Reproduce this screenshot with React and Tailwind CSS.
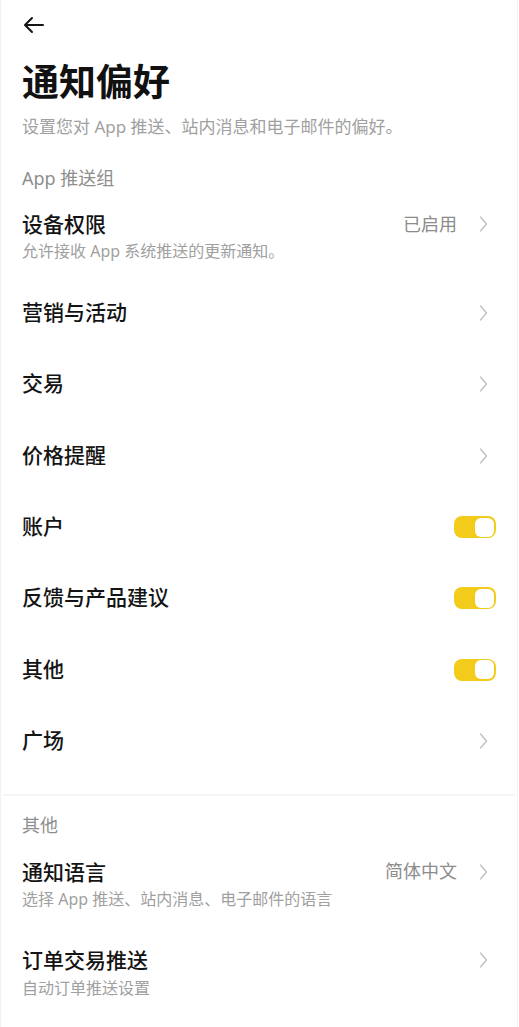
import React from "react";

const FONT = { fontFamily: '"Noto Sans", "Noto Sans CJK SC", sans-serif' };

function Chevron() {
  return (
    <svg width="20" height="20" viewBox="0 0 20 20" className="shrink-0">
      <path d="M4.5 3 L10.5 10 L4.5 17" fill="none" stroke="#c4c4c4" strokeWidth="1.6" strokeLinecap="round" strokeLinejoin="round" />
    </svg>
  );
}

function Toggle() {
  return (
    <div className="w-[42px] h-[22px] rounded-[8px] bg-[#f3cc1b] flex items-center justify-end pr-[2px]">
      <div className="w-[19px] h-[19px] rounded-[6px] bg-white" />
    </div>
  );
}

function SingleRow({ title, toggle }) {
  return (
    <div className="h-[71.33px] flex items-center justify-between">
      <span className="text-[21px] leading-[28px] font-medium text-[#141414] -mt-[2px]">{title}</span>
      {toggle ? <Toggle /> : <Chevron />}
    </div>
  );
}

function TwoLineRow({ title, desc, value, className, gap }) {
  return (
    <div className={"flex items-start justify-between " + (className || "")}>
      <div className={"flex flex-col " + (gap || "gap-[1.5px]")}>
        <span className="text-[21px] leading-[28px] font-medium text-[#141414]">{title}</span>
        <span className="text-[16px] leading-[22px] text-[#a0a0a0]">{desc}</span>
      </div>
      <div className="h-[28px] flex items-center gap-[19px]">
        {value ? <span className="text-[18px] text-[#8c8c8c]">{value}</span> : null}
        <Chevron />
      </div>
    </div>
  );
}

export default function App() {
  return (
    <div style={FONT} className="w-[519px] min-h-[1027px] bg-white">
      <div className="w-[518px] min-h-[1027px] border-x border-[#f2f2f2]">
        <div className="pl-[21px] pr-[21px]">
          <div className="h-[50px] flex items-center">
            <svg width="24" height="24" viewBox="0 0 24 24">
              <path d="M21 12 H3.5 M10 5 L3 12 L10 19" fill="none" stroke="#141414" strokeWidth="2" strokeLinecap="round" strokeLinejoin="round" />
            </svg>
          </div>
          <h1 className="mt-[10px] text-[37px] leading-[44px] font-bold text-[#111111]">通知偏好</h1>
          <p className="mt-[12px] text-[17px] leading-[22px] text-[#a0a0a0]">设置您对 App 推送、站内消息和电子邮件的偏好。</p>
          <div className="mt-[28px] text-[18px] leading-[24px] text-[#8e8e8e]">App 推送组</div>
          <TwoLineRow className="pt-[20px] pb-[16px]" title="设备权限" desc="允许接收 App 系统推送的更新通知。" value="已启用" />
          <SingleRow title="营销与活动" />
          <SingleRow title="交易" />
          <SingleRow title="价格提醒" />
          <SingleRow title="账户" toggle />
          <SingleRow title="反馈与产品建议" toggle />
          <SingleRow title="其他" toggle />
          <SingleRow title="广场" />
        </div>
        <div className="mt-[17.4px] h-[2px] bg-[#f5f5f5] mx-[2px]" />
        <div className="pl-[21px] pr-[21px]">
          <div className="mt-[16.5px] text-[18px] leading-[24px] text-[#8e8e8e]">其他</div>
          <TwoLineRow className="pt-[21px] pb-[18px]" gap="gap-[2px]" title="通知语言" desc="选择 App 推送、站内消息、电子邮件的语言" value="简体中文" />
          <TwoLineRow className="pt-[18px] pb-[18px]" gap="gap-[3px]" title="订单交易推送" desc="自动订单推送设置" />
        </div>
      </div>
    </div>
  );
}
